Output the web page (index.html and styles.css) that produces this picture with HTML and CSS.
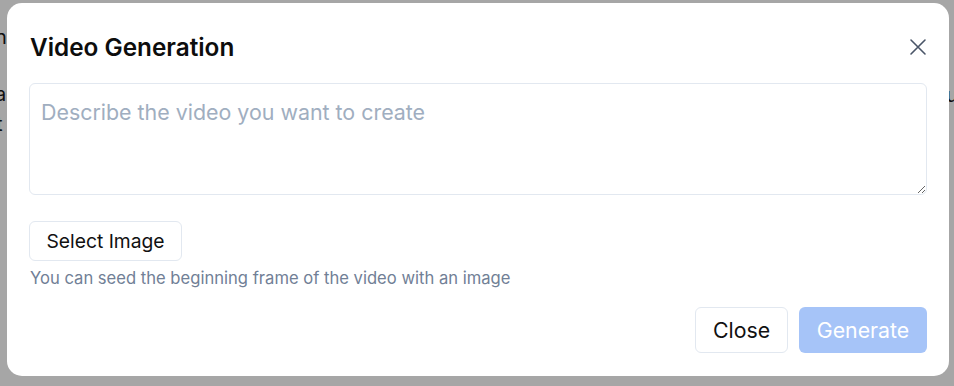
FILE: index.html
```html
<!DOCTYPE html>
<html lang="en">
<head>
<meta charset="utf-8">
<title>Video Generation</title>
<link rel="stylesheet" href="styles.css">
</head>
<body>
<div class="page">
  <span class="bg-frag frag-n">n</span>
  <span class="bg-frag frag-a">a</span>
  <span class="bg-frag frag-t">t</span>
  <span class="bg-frag frag-u">u</span>
</div>
<div class="overlay">
  <div class="modal">
    <div class="modal-header">
      <h2 class="modal-title">Video Generation</h2>
      <button class="close-x" aria-label="Close">
        <svg width="18" height="18" viewBox="0 0 18 18"><path d="M2 2L16 16M16 2L2 16" stroke="#4a5568" stroke-width="1.6" stroke-linecap="round" fill="none"/></svg>
      </button>
    </div>
    <div class="modal-body">
      <textarea class="prompt" placeholder="Describe the video you want to create"></textarea>
      <button class="btn btn-outline select-btn">Select Image</button>
      <p class="helper">You can seed the beginning frame of the video with an image</p>
    </div>
    <div class="modal-footer">
      <button class="btn btn-outline footer-btn">Close</button>
      <button class="btn btn-primary footer-btn" disabled>Generate</button>
    </div>
  </div>
</div>
</body>
</html>
```
FILE: styles.css
```css
* { box-sizing: border-box; }
html, body { margin: 0; padding: 0; }
body {
  width: 954px;
  height: 386px;
  overflow: hidden;
  font-family: Inter, "Liberation Sans", Arial, sans-serif;
  background: #ffffff;
  position: relative;
}
.page {
  position: absolute;
  inset: 0;
  background: #ffffff;
}
.bg-frag {
  position: absolute;
  font-size: 20px;
  color: #1a1a1a;
  line-height: 1;
}
.frag-n { left: -5px; top: 27px; }
.frag-a { left: -5px; top: 84px; }
.frag-t { left: -4px; top: 114px; }
.frag-u { left: 946px; top: 85px; }
.overlay {
  position: absolute;
  inset: 0;
  background: rgba(0, 0, 0, 0.35);
  padding: 3px 5px 0 7px;
}
.modal {
  width: 942px;
  height: 373px;
  background: #ffffff;
  border-radius: 15px;
  display: flex;
  flex-direction: column;
}
.modal-header {
  display: flex;
  justify-content: space-between;
  align-items: flex-start;
  padding: 28px 20px 0 23px;
  height: 80px;
}
.modal-title {
  margin: 0;
  font-size: 24.3px;
  font-weight: 600;
  line-height: 32px;
  color: #0d0d0d;
}
.close-x {
  border: none;
  background: none;
  padding: 0;
  width: 22px;
  height: 22px;
  margin-top: 5px;
  display: flex;
  align-items: center;
  justify-content: center;
  cursor: pointer;
}
.modal-body {
  padding: 0 22px;
  display: flex;
  flex-direction: column;
  align-items: flex-start;
}
.prompt {
  width: 898px;
  height: 112px;
  border: 1px solid #e2e8f0;
  border-radius: 6px;
  padding: 16px 11px;
  font-family: Inter, "Liberation Sans", Arial, sans-serif;
  font-size: 21.4px;
  line-height: 1.2;
  color: #1a202c;
  resize: vertical;
  outline: none;
}
.prompt::placeholder { color: #a0aec0; }
.btn {
  font-family: Inter, "Liberation Sans", Arial, sans-serif;
  border-radius: 6px;
  cursor: pointer;
  display: flex;
  align-items: center;
  justify-content: center;
}
.btn-outline {
  background: #ffffff;
  border: 1px solid #e2e8f0;
  color: #111111;
}
.select-btn {
  margin-top: 26px;
  height: 40px;
  width: 153px;
  font-size: 19.3px;
  padding: 0 12px;
}
.helper {
  margin: 7px 0 0 1px;
  font-size: 16.6px;
  line-height: 20px;
  color: #718096;
}
.modal-footer {
  margin-top: auto;
  padding: 0 22px 23px;
  display: flex;
  justify-content: flex-end;
  gap: 11px;
}
.footer-btn {
  height: 46px;
  font-size: 21.3px;
}
.btn-outline.footer-btn { width: 93px; }
.btn-primary {
  width: 128px;
  background: #a6c4f8;
  border: none;
  color: #ffffff;
  cursor: not-allowed;
}
```
